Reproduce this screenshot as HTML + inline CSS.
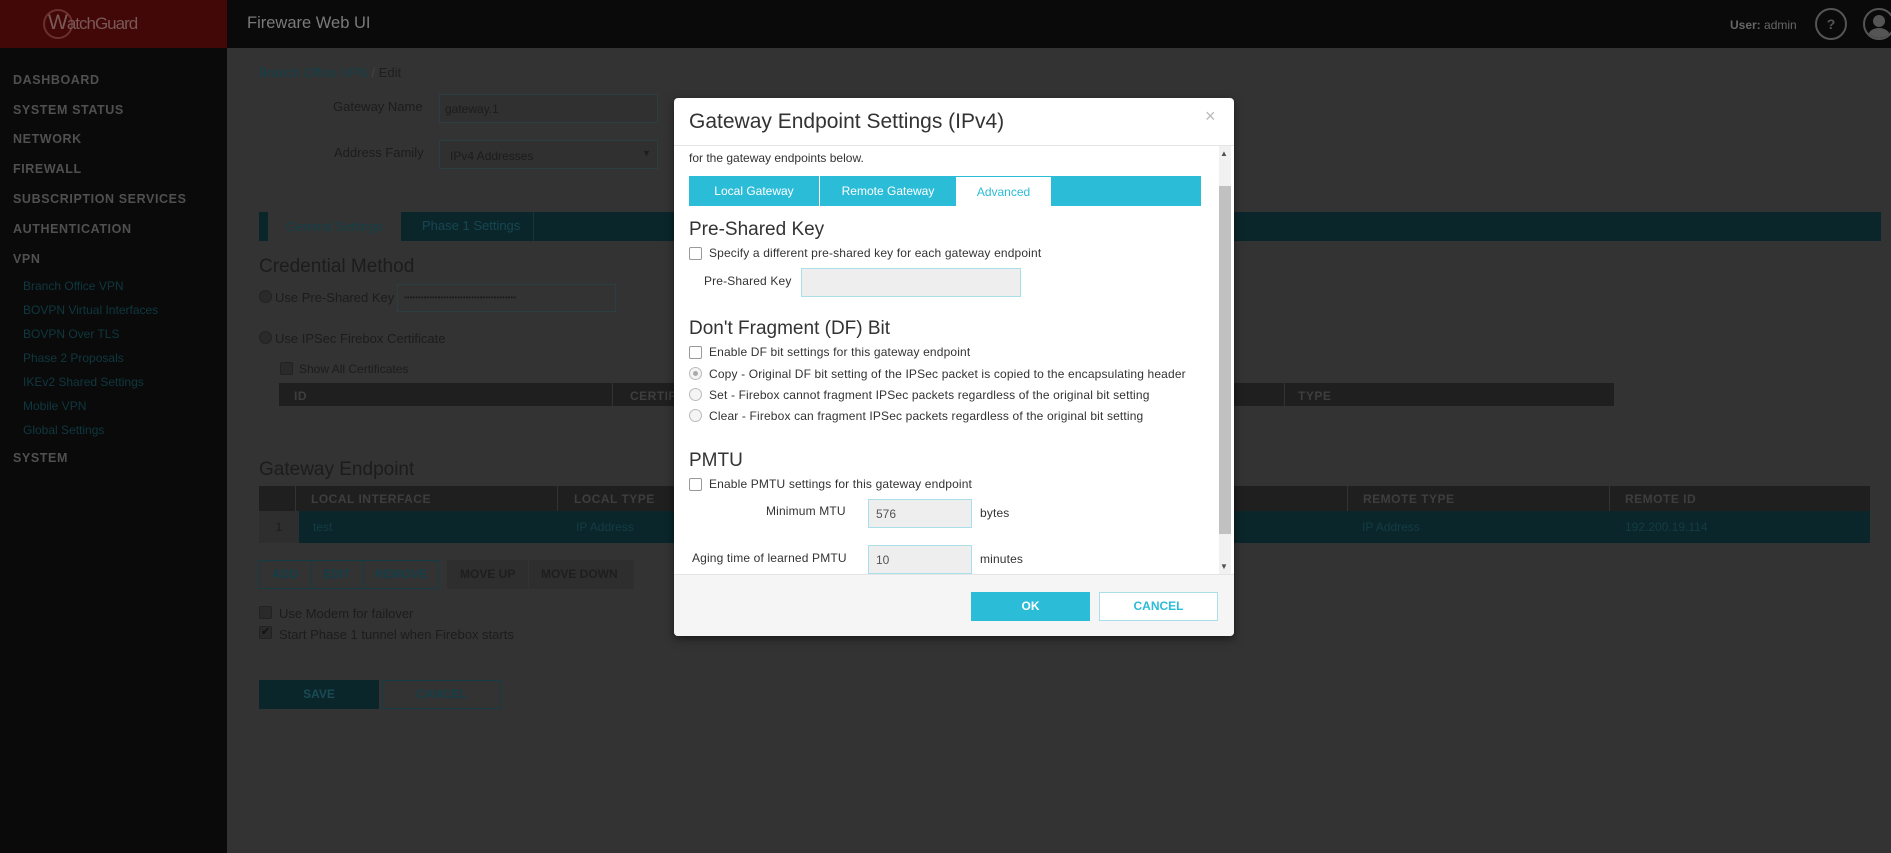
<!DOCTYPE html>
<html><head><meta charset="utf-8"><style>
*{box-sizing:border-box;margin:0;padding:0}
body{width:1891px;height:853px;overflow:hidden;background:#333;font-family:"Liberation Sans",sans-serif;position:relative}
.a{position:absolute;white-space:nowrap}
.nav{position:absolute;left:13px;font-size:12.5px;font-weight:bold;color:#505050;letter-spacing:.6px}
.sub{position:absolute;left:23px;font-size:12px;color:#0f3840}
.th{position:absolute;font-size:12px;font-weight:bold;color:#3e3e3e;letter-spacing:.5px}
.cb{position:absolute;width:13px;height:13px;border:1px solid #999;border-radius:2px;background:#fff}
.rb{position:absolute;width:13px;height:13px;border:1px solid #bbb;border-radius:50%;background:#f4f4f4}
.mt{position:absolute;font-size:12px;color:#333;white-space:nowrap;letter-spacing:.15px}
.mh{position:absolute;font-size:19px;color:#333;white-space:nowrap}
</style></head><body>
<div class="a" style="left:0;top:0;width:1891px;height:48px;background:#0a0a0a"></div>
<div class="a" style="left:0;top:0;width:227px;height:48px;background:#420707"></div>
<div class="a" style="left:43px;top:9px;width:30px;height:30px;border:2px solid #6a3030;border-radius:50%"></div>
<div class="a" style="left:48px;top:11px;font-size:21px;color:#7a5858;letter-spacing:-1px">W<span style="font-size:17px">atchGuard</span></div>
<div class="a" style="left:247px;top:14px;font-size:16.5px;color:#7a7a7a">Fireware Web UI</div>
<div class="a" style="left:1730px;top:18px;font-size:12px;color:#666"><b>User:</b> admin</div>
<div class="a" style="left:1815px;top:8px;width:32px;height:32px;border:2px solid #555;border-radius:50%;color:#555;font-size:14px;text-align:center;line-height:28px;font-weight:bold">?</div>
<div class="a" style="left:1863px;top:8px;width:32px;height:32px;border:2px solid #555;border-radius:50%;overflow:hidden"><div style="position:absolute;left:8px;top:5px;width:12px;height:12px;border-radius:50%;background:#555"></div><div style="position:absolute;left:3px;top:18px;width:22px;height:16px;border-radius:50% 50% 0 0;background:#555"></div></div>
<div class="a" style="left:0;top:48px;width:227px;height:805px;background:#0a0a0a"></div>
<div class="nav" style="top:73px">DASHBOARD</div>
<div class="nav" style="top:103px">SYSTEM STATUS</div>
<div class="nav" style="top:132px">NETWORK</div>
<div class="nav" style="top:162px">FIREWALL</div>
<div class="nav" style="top:192px">SUBSCRIPTION SERVICES</div>
<div class="nav" style="top:222px">AUTHENTICATION</div>
<div class="nav" style="top:252px">VPN</div>
<div class="sub" style="top:279px">Branch Office VPN</div>
<div class="sub" style="top:303px">BOVPN Virtual Interfaces</div>
<div class="sub" style="top:327px">BOVPN Over TLS</div>
<div class="sub" style="top:351px">Phase 2 Proposals</div>
<div class="sub" style="top:375px">IKEv2 Shared Settings</div>
<div class="sub" style="top:399px">Mobile VPN</div>
<div class="sub" style="top:423px">Global Settings</div>
<div class="nav" style="top:451px">SYSTEM</div>
<div class="a" style="left:259px;top:65px;font-size:13px;color:#123f49">Branch Office VPN <span style="color:#444"> / </span><span style="color:#1e1e1e">Edit</span></div>
<div class="a" style="left:333px;top:99px;font-size:13px;color:#1c1c1c">Gateway Name</div>
<div class="a" style="left:439px;top:94px;width:219px;height:29px;border:1px solid #2b3f42;background:#303030;font-size:12px;color:#1c1c1c;padding:7px 5px">gateway.1</div>
<div class="a" style="left:334px;top:145px;font-size:13px;color:#1c1c1c">Address Family</div>
<div class="a" style="left:439px;top:140px;width:219px;height:29px;border:1px solid #2b3f42;background:#303030;font-size:12px;color:#1c1c1c;padding:8px 10px">IPv4 Addresses<span style="position:absolute;right:6px;top:7px;font-size:9px">▼</span></div>
<div class="a" style="left:259px;top:212px;width:1622px;height:29px;background:#0a262b"></div>
<div class="a" style="left:268px;top:212px;width:133px;height:29px;background:#333;font-size:13px;color:#144048;text-align:center;line-height:29px">General Settings</div>
<div class="a" style="left:422px;top:218px;font-size:13px;color:#174651">Phase 1 Settings</div>
<div class="a" style="left:533px;top:212px;width:1px;height:29px;background:#16363c"></div>
<div class="a" style="left:259px;top:256px;font-size:19px;color:#1c1c1c">Credential Method</div>
<div class="rb" style="left:259px;top:290px;background:#2a2a2a;border-color:#222"></div>
<div class="a" style="left:275px;top:290px;font-size:13px;color:#1c1c1c">Use Pre-Shared Key</div>
<div class="a" style="left:397px;top:284px;width:219px;height:28px;border:1px solid #2b3f42;font-size:8px;color:#1c1c1c;padding:8px 6px">••••••••••••••••••••••••••••••••••••••••</div>
<div class="rb" style="left:259px;top:331px;background:#2a2a2a;border-color:#222"></div>
<div class="a" style="left:275px;top:331px;font-size:13px;color:#1c1c1c">Use IPSec Firebox Certificate</div>
<div class="cb" style="left:280px;top:362px;background:#2a2a2a;border-color:#222"></div>
<div class="a" style="left:299px;top:362px;font-size:12px;color:#1c1c1c">Show All Certificates</div>
<div class="a" style="left:279px;top:383px;width:1335px;height:23px;background:#1f1f1f"></div>
<div class="th" style="left:294px;top:389px">ID</div>
<div class="a" style="left:612px;top:383px;width:1px;height:23px;background:#333"></div>
<div class="th" style="left:630px;top:389px">CERTIFICATE</div>
<div class="a" style="left:1284px;top:383px;width:1px;height:23px;background:#333"></div>
<div class="th" style="left:1298px;top:389px">TYPE</div>
<div class="a" style="left:259px;top:459px;font-size:19px;color:#1c1c1c">Gateway Endpoint</div>
<div class="a" style="left:259px;top:486px;width:1611px;height:25px;background:#1f1f1f"></div>
<div class="a" style="left:295px;top:486px;width:1px;height:25px;background:#333"></div>
<div class="th" style="left:311px;top:492px">LOCAL INTERFACE</div>
<div class="a" style="left:557px;top:486px;width:1px;height:25px;background:#333"></div>
<div class="th" style="left:574px;top:492px">LOCAL TYPE</div>
<div class="a" style="left:1347px;top:486px;width:1px;height:25px;background:#333"></div>
<div class="th" style="left:1363px;top:492px">REMOTE TYPE</div>
<div class="a" style="left:1609px;top:486px;width:1px;height:25px;background:#333"></div>
<div class="th" style="left:1625px;top:492px">REMOTE ID</div>
<div class="a" style="left:259px;top:511px;width:40px;height:32px;background:#2e2e2e;font-size:12px;color:#1c1c1c;text-align:center;line-height:32px">1</div>
<div class="a" style="left:299px;top:511px;width:1571px;height:32px;background:#0a262b"></div>
<div class="a" style="left:313px;top:520px;font-size:12px;color:#143c44">test</div>
<div class="a" style="left:576px;top:520px;font-size:12px;color:#143c44">IP Address</div>
<div class="a" style="left:1362px;top:520px;font-size:12px;color:#143c44">IP Address</div>
<div class="a" style="left:1625px;top:520px;font-size:12px;color:#143c44">192.200.19.114</div>
<div class="a" style="left:259px;top:560px;width:180px;height:29px;border:1px solid #143c44;font-size:12px;font-weight:bold;color:#133e47;line-height:27px">
<span style="position:absolute;left:12px">ADD</span><span style="position:absolute;left:51px;top:0;width:1px;height:27px;background:#143c44"></span><span style="position:absolute;left:63px">EDIT</span><span style="position:absolute;left:103px;top:0;width:1px;height:27px;background:#143c44"></span><span style="position:absolute;left:115px">REMOVE</span></div>
<div class="a" style="left:447px;top:560px;width:187px;height:29px;background:#2e2e2e;font-size:12px;font-weight:bold;color:#1e1e1e;line-height:29px">
<span style="position:absolute;left:13px">MOVE UP</span><span style="position:absolute;left:81px;top:0;width:1px;height:29px;background:#333"></span><span style="position:absolute;left:94px">MOVE DOWN</span></div>
<div class="cb" style="left:259px;top:606px;background:#2a2a2a;border-color:#222"></div>
<div class="a" style="left:279px;top:606px;font-size:13px;color:#1c1c1c">Use Modem for failover</div>
<div class="cb" style="left:259px;top:626px;background:#2a2a2a;border-color:#222;color:#111;font-size:11px;line-height:11px;text-align:center">✔</div>
<div class="a" style="left:279px;top:627px;font-size:13px;color:#1c1c1c">Start Phase 1 tunnel when Firebox starts</div>
<div class="a" style="left:259px;top:680px;width:120px;height:29px;background:#0a262b;font-size:12px;font-weight:bold;color:#1a4a54;text-align:center;line-height:29px">SAVE</div>
<div class="a" style="left:382px;top:680px;width:119px;height:29px;border:1px solid #143c44;font-size:12px;font-weight:bold;color:#133e47;text-align:center;line-height:27px">CANCEL</div>
<div class="a" style="left:674px;top:98px;width:560px;height:538px;background:#fff;border-radius:4px;overflow:hidden;box-shadow:0 3px 9px rgba(0,0,0,.5)">
 <div class="a" style="left:15px;top:12px;font-size:21px;color:#333">Gateway Endpoint Settings (IPv4)</div>
 <div class="a" style="left:531px;top:8px;font-size:18px;color:#bbb">×</div>
 <div class="a" style="left:0;top:47px;width:560px;height:1px;background:#e5e5e5"></div>
 <div class="a" style="left:0;top:476px;width:560px;height:62px;background:#f5f5f5;border-top:1px solid #e5e5e5"></div>
 <div class="a" style="left:545px;top:48px;width:12px;height:428px;background:#f1f1f1"></div>
 <div class="a" style="left:545px;top:88px;width:12px;height:348px;background:#c1c1c1"></div>
 <div class="a" style="left:546px;top:51px;font-size:8px;color:#505050">▲</div>
 <div class="a" style="left:546px;top:464px;font-size:8px;color:#505050">▼</div>
 <div class="a" style="left:15px;top:53px;font-size:12px;color:#333">for the gateway endpoints below.</div>
 <div class="a" style="left:15px;top:78px;width:512px;height:30px;background:#2bbcd8"></div>
 <div class="a" style="left:15px;top:78px;width:130px;height:30px;font-size:12px;color:#fff;text-align:center;line-height:30px">Local Gateway</div>
 <div class="a" style="left:145px;top:78px;width:1px;height:30px;background:#fff"></div>
 <div class="a" style="left:147px;top:78px;width:134px;height:30px;font-size:12px;color:#fff;text-align:center;line-height:30px">Remote Gateway</div>
 <div class="a" style="left:282px;top:79px;width:95px;height:30px;background:#fff;font-size:12px;color:#2bbcd8;text-align:center;line-height:30px">Advanced</div>
 <div class="mh" style="left:15px;top:121px">Pre-Shared Key</div>
 <div class="cb" style="left:15px;top:149px"></div>
 <div class="mt" style="left:35px;top:148px">Specify a different pre-shared key for each gateway endpoint</div>
 <div class="mt" style="left:30px;top:176px">Pre-Shared Key</div>
 <div class="a" style="left:127px;top:170px;width:220px;height:29px;background:#eee;border:1px solid #a8dfea"></div>
 <div class="mh" style="left:15px;top:220px">Don't Fragment (DF) Bit</div>
 <div class="cb" style="left:15px;top:248px"></div>
 <div class="mt" style="left:35px;top:247px">Enable DF bit settings for this gateway endpoint</div>
 <div class="rb" style="left:15px;top:269px"><div style="position:absolute;left:3px;top:3px;width:5px;height:5px;border-radius:50%;background:#aaa"></div></div>
 <div class="mt" style="left:35px;top:269px">Copy - Original DF bit setting of the IPSec packet is copied to the encapsulating header</div>
 <div class="rb" style="left:15px;top:290px"></div>
 <div class="mt" style="left:35px;top:290px">Set - Firebox cannot fragment IPSec packets regardless of the original bit setting</div>
 <div class="rb" style="left:15px;top:311px"></div>
 <div class="mt" style="left:35px;top:311px">Clear - Firebox can fragment IPSec packets regardless of the original bit setting</div>
 <div class="mh" style="left:15px;top:352px">PMTU</div>
 <div class="cb" style="left:15px;top:380px"></div>
 <div class="mt" style="left:35px;top:379px">Enable PMTU settings for this gateway endpoint</div>
 <div class="mt" style="left:92px;top:406px">Minimum MTU</div>
 <div class="a" style="left:194px;top:401px;width:104px;height:29px;background:#eee;border:1px solid #a8dfea;font-size:12px;color:#555;padding:7px 7px">576</div>
 <div class="mt" style="left:306px;top:408px">bytes</div>
 <div class="mt" style="left:18px;top:453px">Aging time of learned PMTU</div>
 <div class="a" style="left:194px;top:447px;width:104px;height:29px;background:#eee;border:1px solid #a8dfea;font-size:12px;color:#555;padding:7px 7px">10</div>
 <div class="mt" style="left:306px;top:454px">minutes</div>
 <div class="a" style="left:297px;top:494px;width:119px;height:29px;background:#2bbcd8;font-size:12px;font-weight:bold;color:#fff;text-align:center;line-height:29px">OK</div>
 <div class="a" style="left:425px;top:494px;width:119px;height:29px;background:#fff;border:1px solid #a8dfea;font-size:12px;font-weight:bold;color:#2bbcd8;text-align:center;line-height:27px">CANCEL</div>
</div>
</body></html>
